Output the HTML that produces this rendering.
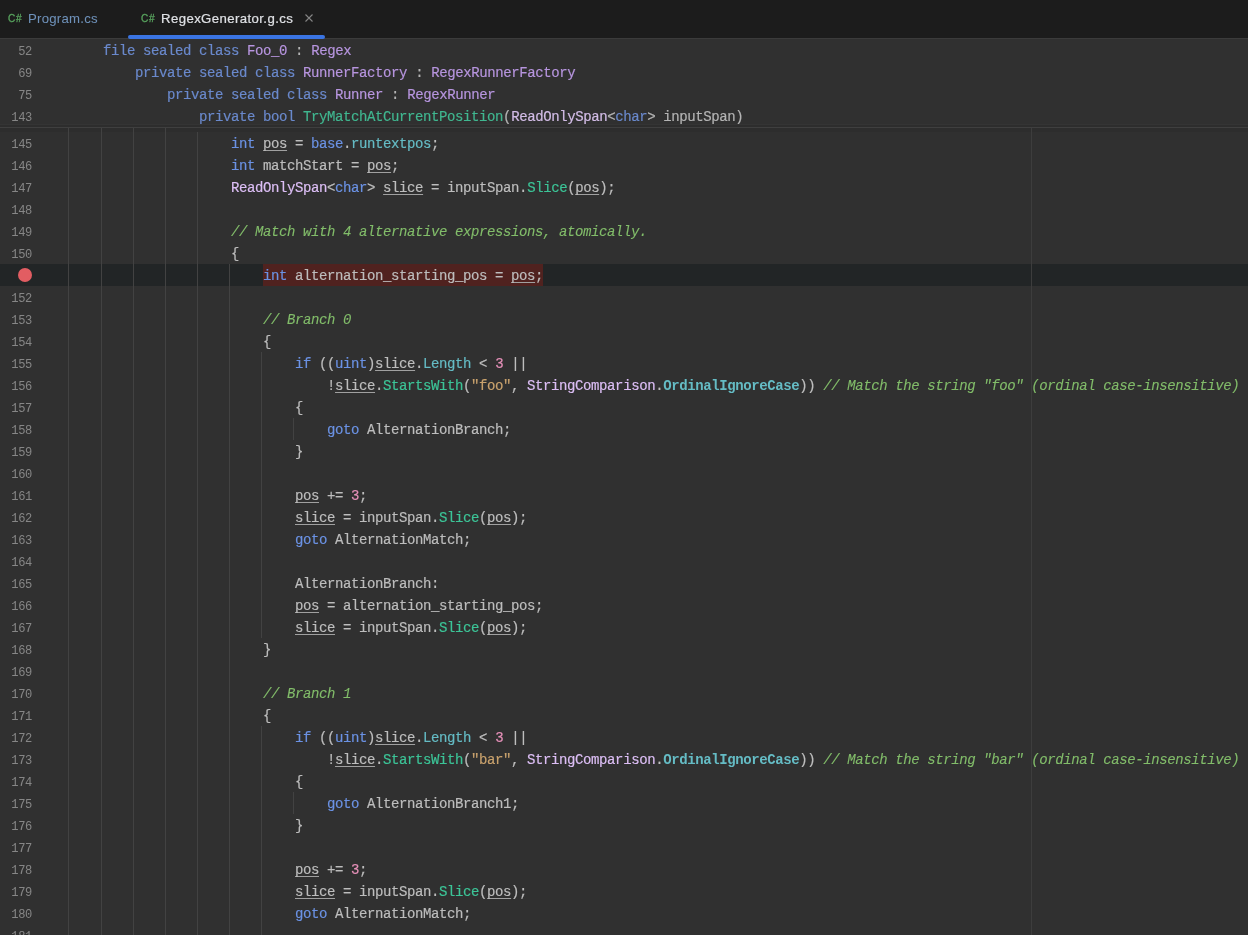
<!DOCTYPE html><html lang="en"><head><meta charset="utf-8"><title>RegexGenerator.g.cs</title><style>
*{margin:0;padding:0;box-sizing:border-box}
html,body{width:1248px;height:935px;overflow:hidden;background:#303030}
body{position:relative;font-family:"Liberation Sans",sans-serif;-webkit-font-smoothing:antialiased}
#root{position:absolute;left:0;top:0;width:1248px;height:935px;will-change:transform}
#tabs{position:absolute;left:0;top:0;width:1248px;height:38px;background:#1c1c1c;border-bottom:1px solid #3b3b3b;box-sizing:content-box}
.tab{position:absolute;top:0;height:38px;font-size:13.2px;line-height:37px;white-space:nowrap}
.tab .ic{position:absolute;top:0;font-size:10px;font-weight:normal;-webkit-text-stroke:0.3px;color:#58a45e;letter-spacing:0.7px}
.tab .nm{position:absolute;top:0;-webkit-text-stroke:0.2px}
#ul{position:absolute;left:128px;top:35px;width:197px;height:4px;background:#3a74e2;border-radius:2px}
#sticky{position:absolute;left:0;top:39px;width:1248px;height:89px;background:#303030;border-bottom:1px solid #3f3f3f}
#ed{position:absolute;left:0;top:128px;width:1248px;height:807px;background:#303030;overflow:hidden}
.ln{position:absolute;left:0;width:1248px;height:22px;line-height:22px;font-family:"Liberation Mono",monospace;font-size:14px;letter-spacing:-0.4px;color:#bdbdbd;white-space:pre;-webkit-text-stroke:0.18px}
.ln .no{position:absolute;left:0;top:2px;width:32.1px;text-align:right;color:#868686;-webkit-text-stroke:0;font-size:13px;letter-spacing:-0.3px;transform:scaleX(0.93);transform-origin:100% 50%}
.ln .cd{position:absolute;top:1px}
.k{color:#6b92e4}.t{color:#bc8ff5}.s{color:#dcbef5}.m{color:#3cc497}.p{color:#65bcc5}
.c{color:#82bd6a;font-style:italic;-webkit-text-stroke:0.1px}.n{color:#e690b9}.q{color:#c9a26d}.e{color:#65bcc5;font-weight:bold;-webkit-text-stroke:0}
#sticky .k{color:#6a89cc}#sticky .t{color:#b795df}#sticky .m{color:#40b790}#sticky .s{color:#d2bce6}#sticky .ln{color:#b4b4b4}
.u{text-decoration:underline;text-decoration-skip-ink:none;text-decoration-color:#a0a0a0;text-underline-offset:2px;text-decoration-thickness:1px}
#bpr{position:absolute;left:263px;top:0;width:280px;height:22px;background:#50221f}
.g{position:absolute;width:1px;background:#424242}
#bpl{position:absolute;left:0;top:136px;width:1248px;height:22px;background:#222526}
#bp{position:absolute;left:18px;top:4px;width:14px;height:14px;border-radius:50%;background:#e25d62}
</style></head><body>
<div id="root">
<div id="tabs">
<div class="tab" style="left:0"><span class="ic" style="left:8px">C#</span><span class="nm" style="left:28px;color:#6e91b9;letter-spacing:0.25px;-webkit-text-stroke:0.05px">Program.cs</span></div>
<div class="tab" style="left:128px"><span class="ic" style="left:13px">C#</span><span class="nm" style="left:33px;color:#dfe1e5;letter-spacing:0.4px">RegexGenerator.g.cs</span><svg style="position:absolute;left:176px;top:13px" width="10" height="10" viewBox="0 0 10 10"><path d="M1.5 1.5 L8.5 8.5 M8.5 1.5 L1.5 8.5" stroke="#868686" stroke-width="1.1" fill="none"/></svg></div>
<div id="ul"></div>
</div>
<div id="sticky">
<div class="ln" style="top:0px"><span class="no">52</span><span class="cd" style="left:103px"><span class="k">file</span> <span class="k">sealed</span> <span class="k">class</span> <span class="t">Foo_0</span> : <span class="t">Regex</span></span></div>
<div class="ln" style="top:22px"><span class="no">69</span><span class="cd" style="left:135px"><span class="k">private</span> <span class="k">sealed</span> <span class="k">class</span> <span class="t">RunnerFactory</span> : <span class="t">RegexRunnerFactory</span></span></div>
<div class="ln" style="top:44px"><span class="no">75</span><span class="cd" style="left:167px"><span class="k">private</span> <span class="k">sealed</span> <span class="k">class</span> <span class="t">Runner</span> : <span class="t">RegexRunner</span></span></div>
<div class="ln" style="top:66px"><span class="no">143</span><span class="cd" style="left:199px"><span class="k">private</span> <span class="k">bool</span> <span class="m">TryMatchAtCurrentPosition</span>(<span class="s">ReadOnlySpan</span>&lt;<span class="k">char</span>&gt; inputSpan)</span></div>
</div>
<div style="position:absolute;left:0;top:124px;width:1248px;height:1px;background:#343434"></div><div style="position:absolute;left:0;top:125px;width:1248px;height:2px;background:#2d2d2d"></div>
<div id="ed">
<div style="position:absolute;left:0;top:0;width:1248px;height:4px;background:#2d2d2d"></div>
<div id="bpl"><div id="bp"></div><div id="bpr"></div></div>
<div class="g" style="left:68px;top:0px;height:807px"></div>
<div class="g" style="left:101px;top:0px;height:807px"></div>
<div class="g" style="left:133px;top:0px;height:807px"></div>
<div class="g" style="left:165px;top:0px;height:807px"></div>
<div class="g" style="left:197px;top:4px;height:803px"></div>
<div class="g" style="left:229px;top:136px;height:671px"></div>
<div class="g" style="left:261px;top:224px;height:286px"></div>
<div class="g" style="left:261px;top:598px;height:209px"></div>
<div class="g" style="left:293px;top:290px;height:22px"></div>
<div class="g" style="left:293px;top:664px;height:22px"></div>
<div class="g" style="left:1031px;top:0;height:807px;background:#3d3d3d"></div>
<div class="ln" style="top:4px"><span class="no">145</span><span class="cd" style="left:231px"><span class="k">int</span> <span class="u">pos</span> = <span class="k">base</span>.<span class="p">runtextpos</span>;</span></div>
<div class="ln" style="top:26px"><span class="no">146</span><span class="cd" style="left:231px"><span class="k">int</span> matchStart = <span class="u">pos</span>;</span></div>
<div class="ln" style="top:48px"><span class="no">147</span><span class="cd" style="left:231px"><span class="s">ReadOnlySpan</span>&lt;<span class="k">char</span>&gt; <span class="u">slice</span> = inputSpan.<span class="m">Slice</span>(<span class="u">pos</span>);</span></div>
<div class="ln" style="top:70px"><span class="no">148</span><span class="cd" style="left:71px"></span></div>
<div class="ln" style="top:92px"><span class="no">149</span><span class="cd" style="left:231px"><span class="c">// Match with 4 alternative expressions, atomically.</span></span></div>
<div class="ln" style="top:114px"><span class="no">150</span><span class="cd" style="left:231px">{</span></div>
<div class="ln" style="top:136px"><span class="cd" style="left:263px"><span class="k">int</span> alternation_starting_pos = <span class="u">pos</span>;</span></div>
<div class="ln" style="top:158px"><span class="no">152</span><span class="cd" style="left:71px"></span></div>
<div class="ln" style="top:180px"><span class="no">153</span><span class="cd" style="left:263px"><span class="c">// Branch 0</span></span></div>
<div class="ln" style="top:202px"><span class="no">154</span><span class="cd" style="left:263px">{</span></div>
<div class="ln" style="top:224px"><span class="no">155</span><span class="cd" style="left:295px"><span class="k">if</span> ((<span class="k">uint</span>)<span class="u">slice</span>.<span class="p">Length</span> &lt; <span class="n">3</span> ||</span></div>
<div class="ln" style="top:246px"><span class="no">156</span><span class="cd" style="left:327px">!<span class="u">slice</span>.<span class="m">StartsWith</span>(<span class="q">"foo"</span>, <span class="s">StringComparison</span>.<span class="e">OrdinalIgnoreCase</span>)) <span class="c">// Match the string "foo" (ordinal case-insensitive)</span></span></div>
<div class="ln" style="top:268px"><span class="no">157</span><span class="cd" style="left:295px">{</span></div>
<div class="ln" style="top:290px"><span class="no">158</span><span class="cd" style="left:327px"><span class="k">goto</span> AlternationBranch;</span></div>
<div class="ln" style="top:312px"><span class="no">159</span><span class="cd" style="left:295px">}</span></div>
<div class="ln" style="top:334px"><span class="no">160</span><span class="cd" style="left:71px"></span></div>
<div class="ln" style="top:356px"><span class="no">161</span><span class="cd" style="left:295px"><span class="u">pos</span> += <span class="n">3</span>;</span></div>
<div class="ln" style="top:378px"><span class="no">162</span><span class="cd" style="left:295px"><span class="u">slice</span> = inputSpan.<span class="m">Slice</span>(<span class="u">pos</span>);</span></div>
<div class="ln" style="top:400px"><span class="no">163</span><span class="cd" style="left:295px"><span class="k">goto</span> AlternationMatch;</span></div>
<div class="ln" style="top:422px"><span class="no">164</span><span class="cd" style="left:71px"></span></div>
<div class="ln" style="top:444px"><span class="no">165</span><span class="cd" style="left:295px">AlternationBranch:</span></div>
<div class="ln" style="top:466px"><span class="no">166</span><span class="cd" style="left:295px"><span class="u">pos</span> = alternation_starting_pos;</span></div>
<div class="ln" style="top:488px"><span class="no">167</span><span class="cd" style="left:295px"><span class="u">slice</span> = inputSpan.<span class="m">Slice</span>(<span class="u">pos</span>);</span></div>
<div class="ln" style="top:510px"><span class="no">168</span><span class="cd" style="left:263px">}</span></div>
<div class="ln" style="top:532px"><span class="no">169</span><span class="cd" style="left:71px"></span></div>
<div class="ln" style="top:554px"><span class="no">170</span><span class="cd" style="left:263px"><span class="c">// Branch 1</span></span></div>
<div class="ln" style="top:576px"><span class="no">171</span><span class="cd" style="left:263px">{</span></div>
<div class="ln" style="top:598px"><span class="no">172</span><span class="cd" style="left:295px"><span class="k">if</span> ((<span class="k">uint</span>)<span class="u">slice</span>.<span class="p">Length</span> &lt; <span class="n">3</span> ||</span></div>
<div class="ln" style="top:620px"><span class="no">173</span><span class="cd" style="left:327px">!<span class="u">slice</span>.<span class="m">StartsWith</span>(<span class="q">"bar"</span>, <span class="s">StringComparison</span>.<span class="e">OrdinalIgnoreCase</span>)) <span class="c">// Match the string "bar" (ordinal case-insensitive)</span></span></div>
<div class="ln" style="top:642px"><span class="no">174</span><span class="cd" style="left:295px">{</span></div>
<div class="ln" style="top:664px"><span class="no">175</span><span class="cd" style="left:327px"><span class="k">goto</span> AlternationBranch1;</span></div>
<div class="ln" style="top:686px"><span class="no">176</span><span class="cd" style="left:295px">}</span></div>
<div class="ln" style="top:708px"><span class="no">177</span><span class="cd" style="left:71px"></span></div>
<div class="ln" style="top:730px"><span class="no">178</span><span class="cd" style="left:295px"><span class="u">pos</span> += <span class="n">3</span>;</span></div>
<div class="ln" style="top:752px"><span class="no">179</span><span class="cd" style="left:295px"><span class="u">slice</span> = inputSpan.<span class="m">Slice</span>(<span class="u">pos</span>);</span></div>
<div class="ln" style="top:774px"><span class="no">180</span><span class="cd" style="left:295px"><span class="k">goto</span> AlternationMatch;</span></div>
<div class="ln" style="top:796px"><span class="no">181</span><span class="cd" style="left:71px"></span></div>
</div>
</div>
</body></html>
